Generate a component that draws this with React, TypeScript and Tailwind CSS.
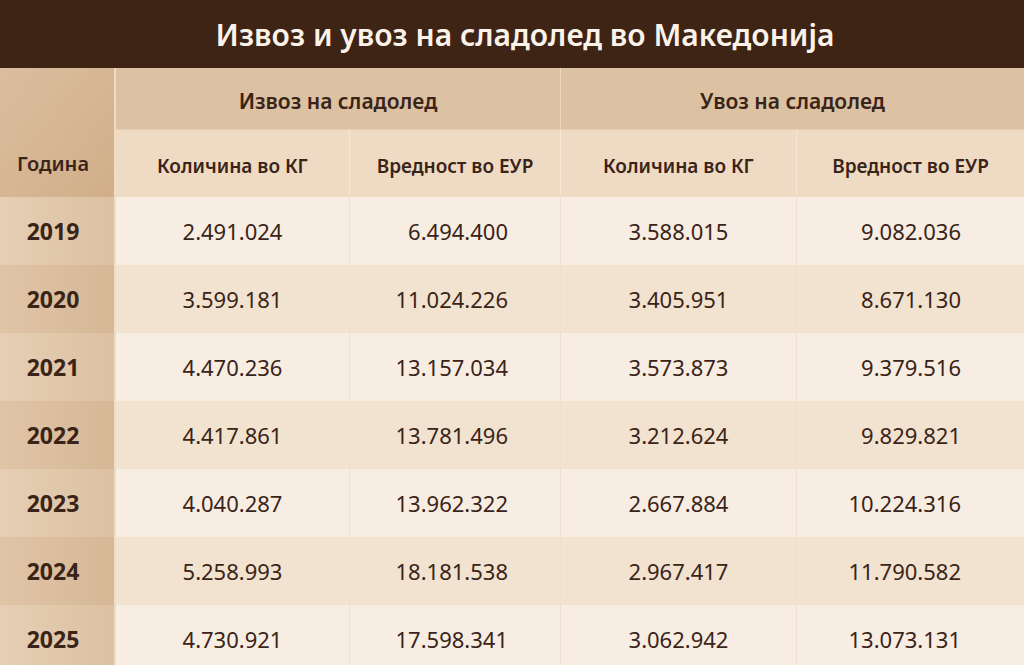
import React from 'react';

const rows = [
  { year: '2019', expKg: '2.491.024', expEur: '6.494.400', impKg: '3.588.015', impEur: '9.082.036' },
  { year: '2020', expKg: '3.599.181', expEur: '11.024.226', impKg: '3.405.951', impEur: '8.671.130' },
  { year: '2021', expKg: '4.470.236', expEur: '13.157.034', impKg: '3.573.873', impEur: '9.379.516' },
  { year: '2022', expKg: '4.417.861', expEur: '13.781.496', impKg: '3.212.624', impEur: '9.829.821' },
  { year: '2023', expKg: '4.040.287', expEur: '13.962.322', impKg: '2.667.884', impEur: '10.224.316' },
  { year: '2024', expKg: '5.258.993', expEur: '18.181.538', impKg: '2.967.417', impEur: '11.790.582' },
  { year: '2025', expKg: '4.730.921', expEur: '17.598.341', impKg: '3.062.942', impEur: '13.073.131' },
];

const App = () => {
  return (
    <div className="w-[1024px] h-[665px] overflow-hidden bg-[#f8ede2] text-[#3a2418] font-['Noto_Sans',sans-serif]">
      {/* Title */}
      <div className="h-[68px] bg-[#3e2414] pl-[26px] flex items-center justify-center">
        <h1 className="text-[30px] font-semibold text-[#fbf3ea]">
          Извоз и увоз на сладолед во Македонија
        </h1>
      </div>

      <div className="grid grid-cols-[116px_234px_211px_236px_1fr]">
        {/* Header */}
        <div className="row-span-2 bg-gradient-to-br from-[#dbbe9f] to-[#d1ae89] border-r-2 border-[#f0dcc4] pt-[62px] pr-[8px] flex items-center justify-center text-[20px] font-semibold">
          Година
        </div>
        <div className="col-span-2 h-[62px] pt-[6px] bg-[#dcc1a2] border-r border-[#ecd8c1] border-b border-b-[#e6cfb5] flex items-center justify-center text-[21px] font-semibold">
          Извоз на сладолед
        </div>
        <div className="col-span-2 h-[62px] pt-[6px] bg-[#dcc1a2] border-b border-b-[#e6cfb5] flex items-center justify-center text-[21px] font-semibold">
          Увоз на сладолед
        </div>
        <div className="h-[67px] pt-[6px] bg-[#efdac3] border-r border-[#f6e6d5] flex items-center justify-center text-[19px] font-semibold">
          Количина во КГ
        </div>
        <div className="h-[67px] pt-[6px] bg-[#efdac3] border-r border-[#f6e6d5] flex items-center justify-center text-[19px] font-semibold">
          Вредност во ЕУР
        </div>
        <div className="h-[67px] pt-[6px] bg-[#efdac3] border-r border-[#f6e6d5] flex items-center justify-center text-[19px] font-semibold">
          Количина во КГ
        </div>
        <div className="h-[67px] pt-[6px] bg-[#efdac3] flex items-center justify-center text-[19px] font-semibold">
          Вредност во ЕУР
        </div>

        {/* Body */}
        {rows.map((r, i) => {
          const bg = i % 2 === 0 ? 'bg-[#f8ede2]' : 'bg-[#f2e2d0]';
          const yearBg = i % 2 === 0 ? 'from-[#e6cfb4] to-[#dcc1a2]' : 'from-[#dfc4a6] to-[#d6b896]';
          return (
            <React.Fragment key={r.year}>
              <div className={`h-[68px] bg-gradient-to-r ${yearBg} border-r-2 border-[#f0dcc4] pr-[8px] flex items-center justify-center text-[23px] font-bold`}>
                {r.year}
              </div>
              <div className={`h-[68px] ${bg} border-r border-[#efdfcd] flex items-center justify-center text-[22px]`}>
                {r.expKg}
              </div>
              <div className={`h-[68px] ${bg} border-r border-[#efdfcd] pr-[52px] flex items-center justify-end text-[22px]`}>
                {r.expEur}
              </div>
              <div className={`h-[68px] ${bg} border-r border-[#efdfcd] flex items-center justify-center text-[22px]`}>
                {r.impKg}
              </div>
              <div className={`h-[68px] ${bg} pr-[63px] flex items-center justify-end text-[22px]`}>
                {r.impEur}
              </div>
            </React.Fragment>
          );
        })}
      </div>
    </div>
  );
};

export default App;
